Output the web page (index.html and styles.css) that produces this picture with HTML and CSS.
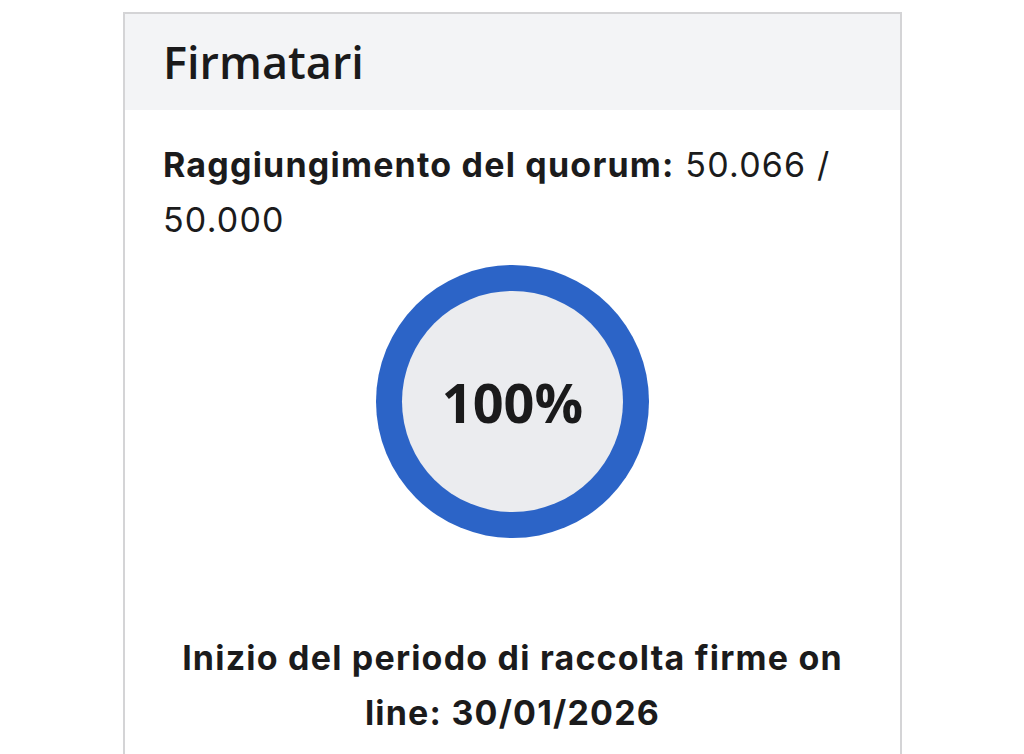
FILE: index.html
```html
<!DOCTYPE html>
<html lang="it">
<head>
<meta charset="utf-8">
<link rel="stylesheet" href="styles.css">
</head>
<body>
<div class="card">
  <div class="card-header">
    <h2 class="title">Firmatari</h2>
  </div>
  <div class="card-body">
    <p class="quorum"><strong>Raggiungimento del quorum:</strong> 50.066 / 50.000</p>
    <div class="ring-wrap">
      <div class="ring">
        <div class="ring-inner"><span class="pct">100%</span></div>
      </div>
    </div>
    <p class="start">Inizio del periodo di raccolta firme on line: 30/01/2026</p>
  </div>
</div>
</body>
</html>
```
FILE: styles.css
```css
html, body {
  margin: 0;
  padding: 0;
  background: #ffffff;
}
body {
  font-family: "Inter", "Roboto", "Liberation Sans", sans-serif;
  color: #1b1b1c;
  padding-top: 12px;
}
.card {
  width: 779px;
  margin-left: 123px;
  border: 2px solid #d4d4d6;
  border-bottom: none;
  min-height: 760px;
  box-sizing: border-box;
}
.card-header {
  background: #f3f4f6;
  height: 96px;
  padding: 0 38px;
  display: flex;
  align-items: center;
}
.title {
  margin: 0;
  font-family: "Open Sans", sans-serif;
  font-weight: 600;
  font-size: 45px;
  line-height: 1;
  color: #1a1a1b;
  position: relative;
  top: -1px;
}
.card-body {
  padding: 27px 38px 0;
}
.quorum {
  margin: 0;
  font-size: 34px;
  line-height: 55px;
  font-weight: 400;
  letter-spacing: 1.2px;
}
.quorum strong {
  font-weight: 700;
}
.ring-wrap {
  display: flex;
  justify-content: center;
  margin-top: 18px;
}
.ring {
  width: 273px;
  height: 273px;
  border-radius: 50%;
  background: #2c64c7;
  display: flex;
  align-items: center;
  justify-content: center;
}
.ring-inner {
  width: 221px;
  height: 221px;
  border-radius: 50%;
  background: #ebecef;
  display: flex;
  align-items: center;
  justify-content: center;
}
.pct {
  font-family: "Open Sans", sans-serif;
  font-weight: 700;
  font-size: 54px;
  color: #1a1a1b;
}
.start {
  margin: 92px 0 0;
  text-align: center;
  font-size: 34px;
  line-height: 55px;
  font-weight: 700;
  letter-spacing: 1.2px;
}
```
